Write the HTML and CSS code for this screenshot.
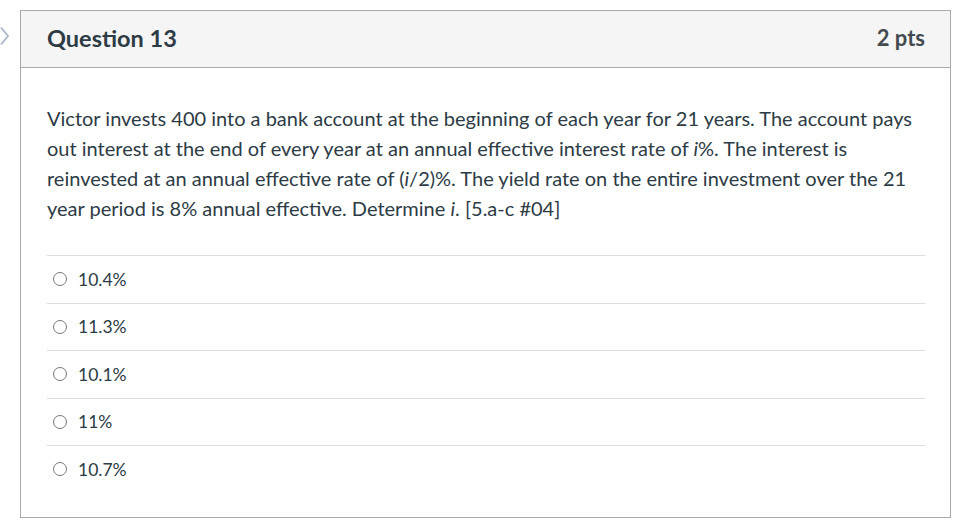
FILE: index.html
```html
<!DOCTYPE html>
<html>
<head>
<meta charset="utf-8">
<link rel="stylesheet" href="styles.css">
</head>
<body>
<div class="page">
  <div class="side">
    <svg class="chev" width="10" height="20" viewBox="0 0 10 20"><path d="M1 1.5 L8 10 L1 18.5" fill="none" stroke="#a9b8c9" stroke-width="1.8"/></svg>
  </div>
  <div class="question">
    <div class="header">
      <span class="title">Question 13</span>
      <span class="pts">2 pts</span>
    </div>
    <div class="content">
      <p class="text">Victor invests 400 into a bank account at the beginning of each year for 21 years. The account pays out interest at the end of every year at an annual effective interest rate of <i>i</i>%. The interest is reinvested at an annual effective rate of (<i>i</i>/2)%. The yield rate on the entire investment over the 21 year period is 8% annual effective. Determine <i>i</i>. [5.a-c #04]</p>
      <div class="answers">
        <label class="answer"><span class="radio"></span><span class="lbl">10.4%</span></label>
        <label class="answer"><span class="radio"></span><span class="lbl">11.3%</span></label>
        <label class="answer"><span class="radio"></span><span class="lbl">10.1%</span></label>
        <label class="answer"><span class="radio"></span><span class="lbl">11%</span></label>
        <label class="answer"><span class="radio"></span><span class="lbl">10.7%</span></label>
      </div>
    </div>
  </div>
</div>
</body>
</html>
```
FILE: styles.css
```css
html, body {
  margin: 0;
  padding: 0;
  background: #fff;
}
body {
  font-family: Lato, "Open Sans", sans-serif;
  color: #2d3b45;
}
.page {
  display: flex;
  align-items: flex-start;
  padding-top: 10px;
}
.side {
  width: 20px;
  flex: none;
  padding-top: 16px;
}
.chev {
  display: block;
}
.question {
  width: 929px;
  border: 1px solid #aaaaaa;
  height: 506px;
}
.header {
  height: 57px;
  box-sizing: border-box;
  background: #f5f5f5;
  border-bottom: 1px solid #aaaaaa;
  display: flex;
  align-items: center;
  justify-content: space-between;
  padding: 0 25px 3px 26px;
}
.title {
  font-size: 23.5px;
  font-weight: 700;
  color: #2d3b45;
}
.pts {
  font-size: 22px;
  font-weight: 700;
  color: #444b50;
}
.content {
  padding: 35px 25px 0 26px;
}
.text {
  margin: 0;
  font-size: 20px;
  line-height: 30px;
  color: #2d3b45;
}
.answers {
  margin-top: 32px;
}
.answer {
  display: flex;
  align-items: center;
  height: 46.5px;
  border-top: 1px solid #dddddd;
  padding-left: 6px;
}
.radio {
  width: 12px;
  height: 12px;
  border: 1px solid #777;
  border-radius: 50%;
  flex: none;
}
.lbl {
  margin-left: 11px;
  font-size: 17.5px;
  color: #2d3b45;
}
```
